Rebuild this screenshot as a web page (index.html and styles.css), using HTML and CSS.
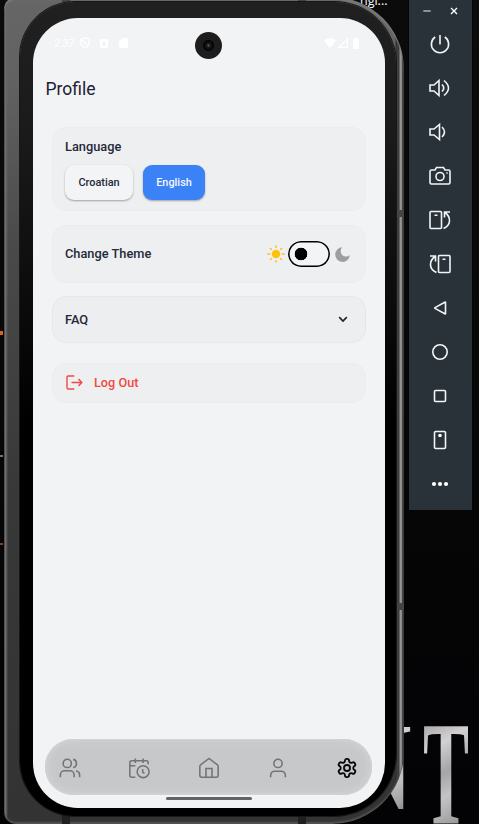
FILE: index.html
```html
<!DOCTYPE html>
<html lang="en">
<head>
<meta charset="utf-8">
<title>Profile</title>
<link rel="stylesheet" href="styles.css">
</head>
<body>
<div class="desktop">
  <span class="desktop-label">ngi...</span>
  <span class="wall-letter wall-n">N</span>
  <span class="wall-letter wall-t">T</span>
  <span class="spark spark-a"></span><span class="spark spark-b"></span><span class="spark spark-c"></span>

  <div class="phone">
    <span class="seam seam-top-a"></span><span class="seam seam-top-b"></span>
    <span class="seam seam-right-a"></span><span class="seam seam-right-b"></span>
    <span class="seam seam-bottom-a"></span><span class="seam seam-bottom-b"></span>
    <div class="bezel">
      <div class="screen">
        <span class="camera"></span>
        <div class="status">
          <span class="time">2:37</span>
          <svg class="st-shield" width="10" height="12" viewBox="0 0 10 12"><path d="M5 .8 9 2.3v3.2C9 8 7.400 10.200 5 11 2.600 10.200 1 8 1 5.500V2.300Z" fill="none" stroke="#fff" stroke-width="1.300"/><path d="M2 2.500 8 9" stroke="#fff" stroke-width="1.300"/></svg>
          <svg class="st-a" width="8" height="9" viewBox="0 0 8 9"><rect width="8" height="9" rx="1.500" fill="#fff"/><path d="m2.500 6.500 1.500-4 1.500 4M3 5.300h2" fill="none" stroke="#e8eaed" stroke-width=".8"/></svg>
          <svg class="st-sd" width="9" height="10" viewBox="0 0 9 10"><path d="M3.500 0H8q1 0 1 1v8q0 1-1 1H1Q0 10 0 9V3.500Z" fill="#fff"/></svg>
          <span class="grow"></span>
          <svg width="12" height="10" viewBox="0 0 12 10"><path d="M0 2.500Q6-2 12 2.500L6 10Z" fill="#fff"/></svg>
          <svg class="st-signal" width="10" height="10" viewBox="0 0 10 10"><path d="M1 9.400H9.400V1Z" fill="none" stroke="#fff" stroke-width="1.200"/></svg>
          <svg class="st-battery" width="6" height="11" viewBox="0 0 6 11"><path d="M1.500 1V0h3v1H5q1 0 1 1v8q0 1-1 1H1Q0 11 0 10V2q0-1 1-1Z" fill="#fff"/></svg>
        </div>

        <h1>Profile</h1>

        <main>
          <section class="card language">
            <h2>Language</h2>
            <div class="choices">
              <button class="choice croatian">Croatian</button>
              <button class="choice english">English</button>
            </div>
          </section>
          <section class="card theme">
            <h2>Change Theme</h2>
            <svg class="sun" width="18" height="18" viewBox="0 0 18 18"><circle cx="9" cy="9" r="4.200" fill="#ffc10a"/><g stroke="#ffc10a" stroke-width="1.500" stroke-linecap="round"><path d="M9 1v1.300M9 15.700V17M1 9h1.700M15.300 9H17M3.500 3.500l.8.800M13.700 13.700l.8.800M14.500 3.500l-.8.800M4.300 13.700l-.8.800"/></g></svg>
            <span class="toggle"></span>
            <svg class="moon" width="15" height="15" viewBox="0 0 15 15"><path d="M7.300.3A7.300 7.300 0 1 0 14.800 8 4.900 4.900 0 1 1 7.300.3Z" fill="#9e9e9e"/></svg>
          </section>
          <section class="card faq">
            <h2>FAQ</h2>
            <svg width="10" height="7" viewBox="0 0 10 7"><path d="m1.200 1.200 3.800 3.800 3.800-3.800" fill="none" stroke="#1f2433" stroke-width="1.700"/></svg>
          </section>
          <section class="card logout">
            <svg width="17" height="15" viewBox="0 0 17 15"><path d="M8.300 1H2.200Q1 1 1 2.200v10.600Q1 14 2.200 14h6.100M5.500 7.500h10M12.500 4l3.300 3.500-3.300 3.500" fill="none" stroke="#f04a42" stroke-width="1.400"/></svg>
            <span>Log Out</span>
          </section>
        </main>

        <nav>
          <svg viewBox="0 0 24 24"><circle cx="9" cy="7" r="4.500"/><path d="M1.500 22v-2.500a4.500 4.500 0 0 1 4.500-4.500h6a4.500 4.500 0 0 1 4.500 4.500V22M15.500 2.600a4.500 4.500 0 0 1 0 8.800M18.500 15.200a4.500 4.500 0 0 1 4 4.300V22"/></svg>
          <svg viewBox="0 0 24 24"><path d="M22 8V6a2 2 0 0 0-2-2H4a2 2 0 0 0-2 2v14a2 2 0 0 0 2 2h4M2 9.500h6M8 1.500v5M16.500 1.500v5"/><circle cx="16.500" cy="16" r="6.500"/><path d="M16 13v3.500l2 1.500"/></svg>
          <svg viewBox="0 0 24 24"><path d="M2 10.200a2 2 0 0 1 .7-1.500L12 1.500l9.300 7.200a2 2 0 0 1 .7 1.500V20a2 2 0 0 1-2 2H4a2 2 0 0 1-2-2ZM8.700 22V12.500h6.600V22"/></svg>
          <svg viewBox="0 0 24 24"><circle cx="12" cy="7" r="4.500"/><path d="M4 22v-2a4.500 4.500 0 0 1 4.500-4.500h7A4.500 4.500 0 0 1 20 20v2"/></svg>
          <svg class="active" viewBox="0 0 24 24"><path d="M12.220 2h-.44a2 2 0 0 0-2 2v.18a2 2 0 0 1-1 1.730l-.43.250a2 2 0 0 1-2 0l-.150-.080a2 2 0 0 0-2.730.730l-.220.380a2 2 0 0 0 .730 2.730l.150.100a2 2 0 0 1 1 1.720v.510a2 2 0 0 1-1 1.740l-.150.090a2 2 0 0 0-.730 2.730l.220.380a2 2 0 0 0 2.730.730l.150-.080a2 2 0 0 1 2 0l.430.250a2 2 0 0 1 1 1.730V20a2 2 0 0 0 2 2h.440a2 2 0 0 0 2-2v-.180a2 2 0 0 1 1-1.730l.430-.250a2 2 0 0 1 2 0l.150.080a2 2 0 0 0 2.730-.730l.220-.390a2 2 0 0 0-.730-2.730l-.150-.080a2 2 0 0 1-1-1.740v-.500a2 2 0 0 1 1-1.740l.150-.090a2 2 0 0 0 .730-2.730l-.220-.380a2 2 0 0 0-2.730-.730l-.150.080a2 2 0 0 1-2 0l-.430-.250a2 2 0 0 1-1-1.730V4a2 2 0 0 0-2-2z"/><circle cx="12" cy="12" r="3.300"/></svg>
        </nav>
        <div class="gesture"></div>
      </div>
    </div>
  </div>

  <aside class="toolbar">
    <div class="window-buttons">
      <svg width="8" height="8" viewBox="0 0 8 8"><path d="M.3 4h7.400" stroke="#9ca3a8" stroke-width="1.700"/></svg>
      <svg width="8" height="8" viewBox="0 0 8 8"><path d="m1 1 6 6M7 1 1 7" stroke="#fff" stroke-width="1.400"/></svg>
    </div>
    <svg class="tool" viewBox="0 0 24 24"><path d="M12 3v9.500M7.200 5a8.600 8.600 0 1 0 9.600 0"/></svg>
    <svg class="tool" viewBox="0 0 24 24"><path d="M2 9v6h4l5 4.500v-15L6 9ZM14 8.500q3.500 3.500 0 7M16 4.500q9 7.500 0 15"/></svg>
    <svg class="tool" viewBox="0 0 24 24"><path d="M2 9v6h4l5.500 4.500v-15L6 9ZM14 7q5 5 0 10"/></svg>
    <svg class="tool" viewBox="0 0 24 24"><path d="M3.500 6H7l1.500-2.500h7L17 6h3.500q1.500 0 1.500 1.500v11q0 1.500-1.500 1.500h-17Q2 20 2 18.500v-11Q2 6 3.500 6Z"/><circle cx="12" cy="12.500" r="4"/><path d="M18.300 9h1.400"/></svg>
    <svg class="tool" viewBox="0 0 24 24"><rect x="2" y="3.500" width="11.500" height="17" rx="1"/><path d="M6.500 7.200h3M15.500 20.500c7.500-3.500 8-11 1.500-16M22 4h-5.500v5.500"/></svg>
    <svg class="tool" viewBox="0 0 24 24"><rect x="10.500" y="3.500" width="11.500" height="17" rx="1"/><path d="M14.500 7.200h3M8.500 20.500C1 17 .5 9.500 7 4.500M2 4h5.500v5.500"/></svg>
    <svg class="tool" viewBox="0 0 24 24"><path d="M17.500 6.500v11q0 .7-.7.300L7 12.400q-.7-.4 0-.8l9.800-5.400q.7-.4.700.3Z"/></svg>
    <svg class="tool" viewBox="0 0 24 24"><circle cx="12" cy="12" r="7.200"/></svg>
    <svg class="tool" viewBox="0 0 24 24"><rect x="6.500" y="6.500" width="11" height="11" rx="1"/></svg>
    <svg class="tool" viewBox="0 0 24 24"><rect x="6.500" y="3.500" width="11" height="17" rx="1.200"/><circle class="solid" cx="12" cy="7.500" r="1.800"/></svg>
    <svg class="tool" viewBox="0 0 24 24"><g class="solid"><circle cx="6" cy="12" r="2.100"/><circle cx="12" cy="12" r="2.100"/><circle cx="18" cy="12" r="2.100"/></g></svg>
  </aside>
</div>
</body>
</html>
```

FILE: styles.css
```css
* { box-sizing: border-box; }
body { margin: 0; background: #060607; font-family: Roboto, "Liberation Sans", sans-serif; }
svg { display: block; flex: none; }

.desktop {
  position: relative;
  display: flex;
  align-items: flex-start;
  width: 479px;
  height: 824px;
  padding-left: 4px;
  overflow: hidden;
  background: linear-gradient(#0c0b0b 0, #0b0a09 18%, #060606 60%, #030306 100%);
}
.desktop-label {
  position: absolute;
  left: 360px;
  top: -8px;
  font: 12.500px/18px "Open Sans", sans-serif;
  color: #fff;
}
.wall-letter {
  position: absolute;
  font: bold 100px/1 "Liberation Serif", serif;
  color: transparent;
  background: linear-gradient(165deg, #aaa8a9 14%, #d2d0d1 30%, #a6a4a5 48%, #c5c3c4 62%, #a3a1a2 78%, #777 92%);
  -webkit-background-clip: text;
  background-clip: text;
  transform-origin: 0 0;
}
.wall-n { left: 352px; top: 705px; transform: scale(.82, 1.25); }
.wall-t { left: 423px; top: 701px; transform: scale(.69, 1.48); }
.spark { position: absolute; left: 0; width: 3px; height: 4px; }
.spark-a { top: 331px; background: #d9651c; }
.spark-b { top: 455px; height: 2px; background: #77745e; }
.spark-c { top: 543px; height: 2px; background: #85401d; }

.phone {
  position: relative;
  width: 400px;
  height: 827px;
  margin-top: -3px;
  padding: 5px 8px 8px 16px;
  border-radius: 12px 72px 72px 12px;
  background:
    linear-gradient(90deg, #222 0, #777 1px, #666 2px, transparent 4px, transparent 391px, #303030 392px, #444 394px, #333 395px, #999 396px, #8b8b8b 397.500px, #444 398.500px, #222 400px),
    linear-gradient(#666 0, #626262 10%, #4a4a4a 30%, #383838 60%, #333 100%);
  box-shadow: inset 0 3px 1px #777, inset 0 -2px 2px #555;
}
.seam { position: absolute; background: #444; }
.seam-top-a { left: 58px; top: 0; width: 8px; height: 6px; }
.seam-top-b { left: 294px; top: 0; width: 8px; height: 6px; }
.seam-right-a { right: 0; top: 213px; width: 8px; height: 7px; }
.seam-right-b { right: 0; top: 606px; width: 8px; height: 7px; }
.seam-bottom-a { left: 58px; bottom: 0; width: 8px; height: 10px; background: #202020; }
.seam-bottom-b { left: 294px; bottom: 0; width: 8px; height: 10px; background: #202020; }
.bezel {
  position: relative;
  height: 814px;
  padding: 16px 11px 8px 13px;
  border-radius: 55px 62px 62px 55px;
  background: linear-gradient(#202020 0, #1b1b1b 15%, #000 52%);
  box-shadow: 0 0 0 1px #171717;
}
.screen {
  position: relative;
  display: flex;
  flex-direction: column;
  height: 790px;
  overflow: hidden;
  border-radius: 45px;
  background: #f2f3f5;
}
.camera {
  position: absolute;
  left: 162px;
  top: 14px;
  width: 27px;
  height: 27px;
  border-radius: 50%;
  background: radial-gradient(circle, #77504c 0, #17181b 2px, #020202 5px, #1d1d1d 6px);
}
.status {
  display: flex;
  align-items: center;
  height: 14px;
  margin: 18px 26px 0 21px;
  color: #fff;
  font-size: 10.500px;
}
.time { width: 22px; }
.st-shield { margin-left: 4px; }
.st-a { margin-left: 10px; }
.st-sd { margin-left: 11px; }
.grow { flex: 1; }
.st-signal { margin-left: 2px; }
.st-battery { margin-left: 5px; }
h1 {
  margin: 28px 0 0 12.500px;
  font-size: 17.500px;
  line-height: 22px;
  font-weight: 400;
  color: #1d2132;
}
main { display: flex; flex-direction: column; margin: 27px 19px 0; }
.card {
  border: 1px solid #ebecee;
  border-radius: 14px;
  background: #eeeff1;
  padding: 0 13px 0 12px;
}
h2 { margin: 0; font-size: 12.800px; line-height: 16px; font-weight: 500; color: #242938; }
.language { height: 84px; padding-top: 11px; }
.choices { display: flex; gap: 10px; margin-top: 10px; }
.choice {
  height: 35px;
  padding: 0;
  border: 0;
  border-radius: 9px;
  font: 500 10.900px Roboto, sans-serif;
  box-shadow: 0 1px 2px #0005;
}
.croatian { width: 68px; background: #f3f4f6; color: #242938; }
.english { width: 62px; background: #3b82f6; color: #f5f8ff; }
.theme { display: flex; align-items: center; height: 58px; margin-top: 14px; }
.theme h2 { flex: 1; }
.toggle {
  width: 42px;
  height: 26px;
  margin: 0 5px 0 3px;
  border-radius: 13px;
  background: radial-gradient(circle at 13px 50%, #000 6px, transparent 6.600px), #f3f4f6;
  box-shadow: inset 0 0 0 1.600px #000;
}
.moon { margin-right: 2px; }
.faq { display: flex; align-items: center; justify-content: space-between; height: 47px; margin-top: 13px; padding-right: 17px; background: #edeef0; border-color: #e6e7e9; }
.logout { display: flex; align-items: center; gap: 11px; height: 40px; margin-top: 20px; padding: 0 13px 2px; font-size: 12.700px; font-weight: 500; color: #f04a42; }
nav {
  display: flex;
  align-items: center;
  justify-content: space-between;
  height: 56px;
  margin: auto 13px 0 12px;
  padding: 2px 14px 0;
  border-radius: 28px;
  background: #c7c8ca;
  box-shadow: inset 0 0 8px 1px #d4d5d7, inset 0 0 0 1px #cfd0d2;
}
nav svg { width: 22px; height: 22px; fill: none; stroke: #737477; stroke-width: 1.700; }
nav .active { stroke: #080808; stroke-width: 2; }
.gesture { width: 86px; height: 3px; margin: 2px 0 8px 133px; border-radius: 2px; background: #636365; }

.toolbar {
  width: 63px;
  height: 510px;
  margin-left: 5px;
  background: #283238;
  box-shadow: 0 0 0 1px #050505;
}
.window-buttons { display: flex; align-items: center; justify-content: space-between; height: 22px; padding: 0 14px; }
.tool { width: 24px; height: 24px; margin: 10px auto 20px 19px; fill: none; stroke: #f2f4f5; stroke-width: 1.600; }
.solid { fill: #fff; stroke: none; }
```
